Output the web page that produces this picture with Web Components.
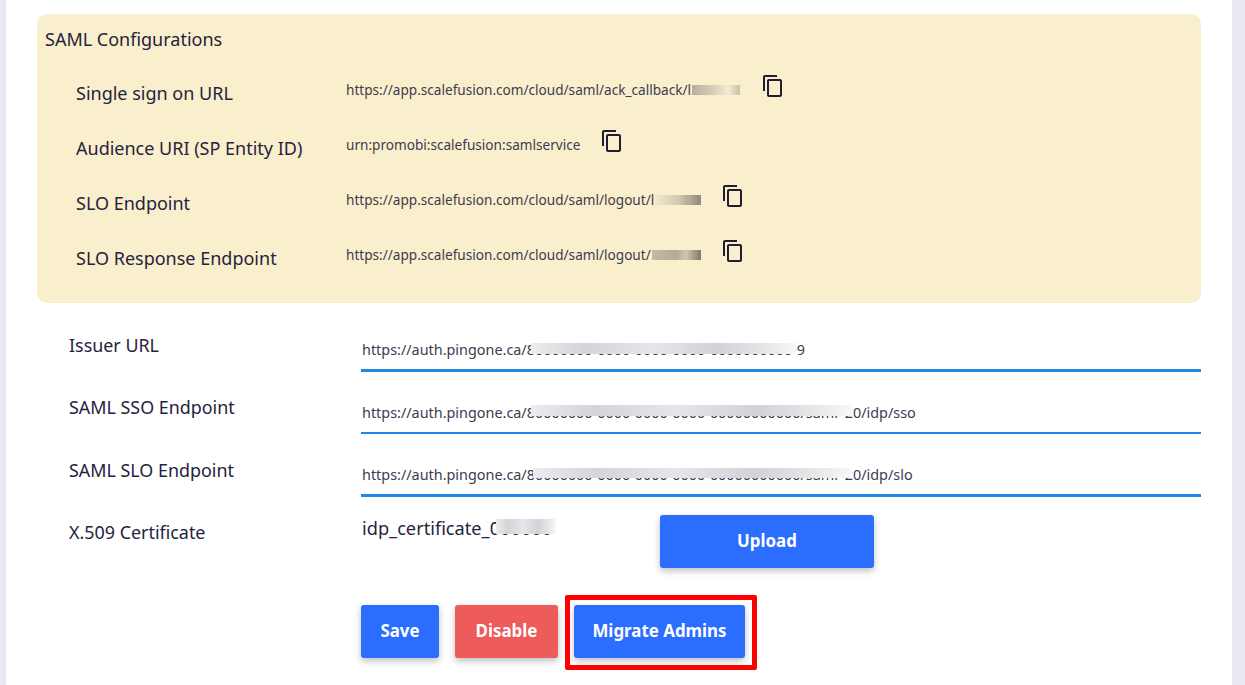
<!DOCTYPE html>
<html>
<head>
<meta charset="utf-8">
<title>SAML Configurations</title>
<style>
    html, body { margin: 0; height: 685px; overflow: hidden; background: #e9eaf1; }
    body { font-family: "Noto Sans", sans-serif; color: #25233e; }
</style>
</head>
<body>
<saml-page>
    <saml-panel heading="SAML Configurations">
        <saml-row label="Single sign on URL">https://app.scalefusion.com/cloud/saml/ack_callback/<redact-mask w="54" t="4" h="10" l="5" r="1" tone="a">l</redact-mask></saml-row>
        <saml-row label="Audience URI (SP Entity ID)">urn:promobi:scalefusion:samlservice</saml-row>
        <saml-row label="SLO Endpoint">https://app.scalefusion.com/cloud/saml/logout/<redact-mask w="50" t="4" h="10" l="4" tone="b">l</redact-mask></saml-row>
        <saml-row label="SLO Response Endpoint">https://app.scalefusion.com/cloud/saml/logout/<redact-mask w="50" t="4" h="10" l="1" tone="c">&nbsp;</redact-mask></saml-row>
    </saml-panel>

    <form-field label="Issuer URL">https://auth.pingone.ca/<redact-mask w="270" t="3" h="11" l="4" tone="w">80000000-0000-0000-0000-0000000000</redact-mask>9</form-field>
    <form-field label="SAML SSO Endpoint" thin>https://auth.pingone.ca/<redact-mask w="318" t="2" h="11" l="4" r="-7" tone="w">80000000-0000-0000-0000-00000000000/saml</redact-mask>20/idp/sso</form-field>
    <form-field label="SAML SLO Endpoint">https://auth.pingone.ca/<redact-mask w="318" t="3" h="10" l="6" r="-7" tone="w">80000000-0000-0000-0000-00000000000/saml</redact-mask>20/idp/slo</form-field>

    <cert-row label="X.509 Certificate" file="idp_certificate_"></cert-row>

    <action-bar>
        <ui-button style="width:78px">Save</ui-button>
        <ui-button style="width:103px" variant="danger">Disable</ui-button>
        <ui-button style="width:171px" marked>Migrate Admins</ui-button>
    </action-bar>
</saml-page>

<script>
// white sheet on the grey page
class SamlPage extends HTMLElement {
    constructor() {
        super();
        this.attachShadow({ mode: "open" }).innerHTML = `
            <style>
                :host {
                    display: block;
                    box-sizing: border-box;
                    height: 685px;
                    margin: 0 13px 0 6px;
                    padding-top: 14px;
                    background: #fff;
                }
            </style>
            <slot></slot>`;
    }
}

class SamlPanel extends HTMLElement {
    constructor() {
        super();
        this.attachShadow({ mode: "open" }).innerHTML = `
            <style>
                :host {
                    display: block;
                    box-sizing: border-box;
                    height: 289px;
                    margin: 0 31px;
                    padding: 13px 8px 0;
                    background: #faefcd;
                    border-radius: 10px;
                }
                h2 {
                    margin: 0 0 25px;
                    font-size: 18px;
                    line-height: 25px;
                    font-weight: 400;
                    color: #25233e;
                }
            </style>
            <h2></h2>
            <slot></slot>`;
        this.shadowRoot.querySelector("h2").textContent = this.getAttribute("heading");
    }
}

// copy icon is the material content_copy glyph
class SamlRow extends HTMLElement {
    constructor() {
        super();
        this.attachShadow({ mode: "open" }).innerHTML = `
            <style>
                :host {
                    display: grid;
                    grid-template-columns: 270px auto;
                    justify-content: start;
                    height: 55px;
                    padding-left: 31px;
                }
                .label {
                    font-size: 18px;
                    line-height: 26px;
                    padding-top: 3px;
                    color: #25233e;
                }
                .value {
                    display: flex;
                    align-items: flex-start;
                    font-size: 13.6px;
                    line-height: 18px;
                    color: #3d3b4f;
                }
                .text { padding-top: 4px; white-space: nowrap; }
                svg { display: block; margin: -3px 0 0 20px; width: 24px; height: 24px; fill: #1f1c33; }
            </style>
            <div class="label"></div>
            <div class="value">
                <div class="text"><slot></slot></div>
                <svg viewBox="0 0 24 24"><path d="M16 1H4c-1.1 0-2 .9-2 2v14h2V3h12V1zm3 4H8c-1.1 0-2 .9-2 2v14c0 1.1.9 2 2 2h11c1.1 0 2-.9 2-2V7c0-1.1-.9-2-2-2zm0 16H8V7h11v14z"/></svg>
            </div>`;
        this.shadowRoot.querySelector(".label").textContent = this.getAttribute("label");
    }
}

class FormField extends HTMLElement {
    constructor() {
        super();
        this.attachShadow({ mode: "open" }).innerHTML = `
            <style>
                :host {
                    display: grid;
                    grid-template-columns: 292px 1fr;
                    height: 62.5px;
                    margin: 0 31px 0 63px;
                }
                .label {
                    font-size: 17.9px;
                    line-height: 26px;
                    padding-top: 29px;
                    color: #25233e;
                }
                .value {
                    box-sizing: border-box;
                    height: 56px;
                    margin-top: 13px;
                    padding: 24px 0 0 1px;
                    border-bottom: 3px solid #1e88e5;
                    font-size: 14.4px;
                    line-height: 20px;
                    color: #3d3b4f;
                    white-space: nowrap;
                }
                :host([thin]) .label { padding-top: 28px; }
                :host([thin]) .value { height: 55px; border-bottom-width: 2px; }
            </style>
            <div class="label"></div>
            <div class="value"><slot></slot></div>`;
        this.shadowRoot.querySelector(".label").textContent = this.getAttribute("label");
    }
}

class CertRow extends HTMLElement {
    constructor() {
        super();
        this.attachShadow({ mode: "open" }).innerHTML = `
            <style>
                :host {
                    display: grid;
                    grid-template-columns: 292px 299px auto;
                    justify-content: start;
                    height: 53px;
                    margin: 24px 0 0 63px;
                }
                .label { font-size: 17.9px; line-height: 26px; padding-top: 4px; }
                .file { font-size: 18.2px; line-height: 26px; padding-left: 1px; white-space: nowrap; }
                ui-button { width: 214px; }
            </style>
            <div class="label"></div>
            <div class="file"><span></span><redact-mask w="70" t="4" h="15" l="6" r="4" tone="w">000000</redact-mask></div>
            <ui-button>Upload</ui-button>`;
        this.shadowRoot.querySelector(".label").textContent = this.getAttribute("label");
        this.shadowRoot.querySelector("span").textContent = this.getAttribute("file");
    }
}

class ActionBar extends HTMLElement {
    constructor() {
        super();
        this.attachShadow({ mode: "open" }).innerHTML = `
            <style>
                :host { display: flex; gap: 16px; margin: 37px 0 0 355px; }
            </style>
            <slot></slot>`;
    }
}

class UiButton extends HTMLElement {
    constructor() {
        super();
        this.attachShadow({ mode: "open" }).innerHTML = `
            <style>
                :host {
                    display: flex;
                    box-sizing: border-box;
                    position: relative;
                    align-items: center;
                    justify-content: center;
                    height: 53px;
                    padding-bottom: 2px;
                    border-radius: 3px;
                    background: #2a6dff;
                    color: #fff;
                    font-size: 16.9px;
                    font-weight: 700;
                    box-shadow: 0 3px 7px rgba(0, 0, 0, .25);
                }
                :host([variant="danger"]) { background: #ee5b5b; }
                /* red annotation drawn over the screenshot */
                :host([marked])::after {
                    content: "";
                    position: absolute;
                    top: -10px;
                    left: -9px;
                    right: -12px;
                    bottom: -12px;
                    border: 5px solid #fe0000;
                    border-radius: 2px;
                }
            </style>
            <slot></slot>`;
    }
}

// smudge that hides part of a value, the bottoms of the glyphs stay visible
class RedactMask extends HTMLElement {
    constructor() {
        super();
        const tones = {
            a: "linear-gradient(90deg,#b9ae9b,#d8cdb8 45%,#f5ebcf 75%,#c9bfa9)",
            b: "linear-gradient(90deg,#f3e9cc,#d5cab2 50%,#8f897b)",
            c: "linear-gradient(90deg,#c3b9a5,#b3aa97 50%,#d0c6ae 70%,#7d786e)",
            w: "linear-gradient(90deg,#ecebee,#d4d4d9 20%,#e6e6ea 45%,#d2d2d7 70%,#e9e9ec 90%,#f8f8f9)"
        };
        const attr = (name, def) => this.getAttribute(name) || def;
        this.attachShadow({ mode: "open" }).innerHTML = `
            <style>
                :host {
                    display: inline-block;
                    position: relative;
                    width: ${attr("w", 48)}px;
                    white-space: nowrap;
                }
                i {
                    position: absolute;
                    left: ${attr("l", 0)}px;
                    right: ${attr("r", 0)}px;
                    top: ${attr("t", 0)}px;
                    height: ${attr("h", 12)}px;
                    background: ${tones[attr("tone", "w")]};
                }
            </style>
            <slot></slot><i></i>`;
    }
}

customElements.define("saml-page", SamlPage);
customElements.define("saml-panel", SamlPanel);
customElements.define("saml-row", SamlRow);
customElements.define("form-field", FormField);
customElements.define("cert-row", CertRow);
customElements.define("action-bar", ActionBar);
customElements.define("ui-button", UiButton);
customElements.define("redact-mask", RedactMask);
</script>
</body>
</html>
